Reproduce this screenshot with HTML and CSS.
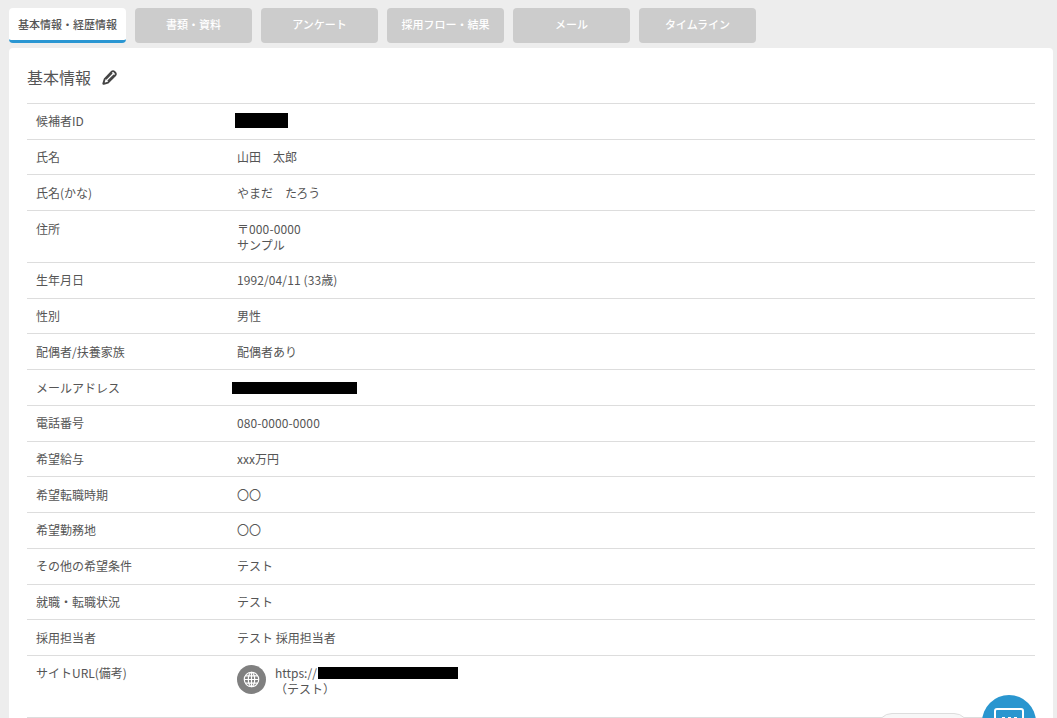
FILE: index.html
```html
<!DOCTYPE html>
<html lang="ja">
<head>
<meta charset="utf-8">
<title>基本情報</title>
<link rel="stylesheet" href="styles.css">
</head>
<body>
<nav class="tabs">
  <a class="tab active">基本情報・経歴情報</a>
  <a class="tab">書類・資料</a>
  <a class="tab">アンケート</a>
  <a class="tab">採用フロー・結果</a>
  <a class="tab">メール</a>
  <a class="tab">タイムライン</a>
</nav>
<main class="card">
  <h2 class="title">基本情報
    <svg class="pencil" viewBox="0 0 16 16" width="15" height="15" fill="none" stroke="#444"><path d="M10.4 1.8a1.9 1.9 0 0 1 2.7 0l1.1 1.1a1.9 1.9 0 0 1 0 2.7l-7.8 7.8-4.5 1.4a.4.4 0 0 1-.5-.5l1.4-4.5z" stroke-width="2" stroke-linejoin="round"/><path d="M4.2 9.8l6.6-6.6M6.2 11.8l6.6-6.6" stroke-width="1.4"/></svg>
  </h2>
  <dl class="rows">
    <div class="row"><dt>候補者ID</dt><dd><span class="mask mask-id"></span></dd></div>
    <div class="row"><dt>氏名</dt><dd>山田　太郎</dd></div>
    <div class="row"><dt>氏名(かな)</dt><dd>やまだ　たろう</dd></div>
    <div class="row"><dt>住所</dt><dd><span class="num">〒000-0000</span><br>サンプル</dd></div>
    <div class="row"><dt>生年月日</dt><dd><span class="num">1992/04/11 (33</span>歳)</dd></div>
    <div class="row"><dt>性別</dt><dd>男性</dd></div>
    <div class="row"><dt>配偶者/扶養家族</dt><dd>配偶者あり</dd></div>
    <div class="row"><dt>メールアドレス</dt><dd><span class="mask mask-mail"></span></dd></div>
    <div class="row"><dt>電話番号</dt><dd><span class="num">080-0000-0000</span></dd></div>
    <div class="row"><dt>希望給与</dt><dd>xxx万円</dd></div>
    <div class="row"><dt>希望転職時期</dt><dd>〇〇</dd></div>
    <div class="row"><dt>希望勤務地</dt><dd>〇〇</dd></div>
    <div class="row"><dt>その他の希望条件</dt><dd>テスト</dd></div>
    <div class="row"><dt>就職・転職状況</dt><dd>テスト</dd></div>
    <div class="row"><dt>採用担当者</dt><dd>テスト 採用担当者</dd></div>
    <div class="row row-site"><dt>サイトURL(備考)</dt><dd class="site">
      <span class="globe"><svg viewBox="0 0 16 16" width="17" height="17" fill="none" stroke="#fff" stroke-width="1.1"><circle cx="8" cy="8" r="6.8"/><ellipse cx="8" cy="8" rx="3" ry="6.8"/><path d="M8 1.2v13.6M1.2 8h13.6M2.2 4.6h11.6M2.2 11.4h11.6"/></svg></span>
      <span class="site-text">https://<span class="mask mask-url"></span><br>（テスト）</span>
    </dd></div>
  </dl>
</main>
<div class="pill"></div>
<div class="chat"><svg viewBox="0 0 32 32" width="32" height="32"><rect x="2" y="2" width="28" height="24" rx="2" fill="none" stroke="#fff" stroke-width="2"/><path d="M9 11h3M15 11h3M21 11h3" stroke="#fff" stroke-width="2"/></svg></div>
</body>
</html>
```
FILE: styles.css
```css
* { box-sizing: border-box; }
html, body { height: 100%; overflow: hidden; }
body {
  margin: 0;
  background: #ededed;
  color: #555;
  font-family: "Noto Sans CJK JP", "Noto Sans", sans-serif;
  font-size: 12px;
  line-height: 16px;
}
.tabs { display: flex; gap: 9px; padding: 8px 0 0 9px; height: 48px; }
.tab {
  width: 117px; height: 35px;
  display: flex; align-items: center; justify-content: center;
  background: #ccc; color: #fff;
  border-radius: 4px;
  padding-bottom: 3px;
  font-size: 11px; font-weight: 500;
}
.tab.active { background: #fff; color: #555; border-bottom: 3px solid #2a96d2; padding-bottom: 0; }
.card {
  margin: 0 4px 0 9px;
  background: #fff;
  border-radius: 4px 4px 0 0;
  padding: 18px 18px 0 18px;
  height: 800px;
}
.title {
  display: flex; align-items: center; gap: 11px;
  margin: 0; height: 37px; padding-bottom: 16px;
  font-size: 16px; font-weight: 400; line-height: 24px;
  color: #555;
}
.pencil { margin-top: 2px; }
.rows { margin: 0; border-bottom: 1px solid #ddd; }
.row {
  display: flex;
  border-top: 1px solid #ddd;
  padding: 9.4px 9px 9.35px;
}
dt { width: 201px; flex: none; }
dd { margin: 0; }
.num { letter-spacing: 0.1px; }
.mask { display: inline-block; background: #000; vertical-align: top; }
.mask-id { width: 53px; height: 15px; margin-left: -2px; }
.mask-mail { width: 125px; height: 12px; margin: 2px 0 0 -5px; }
.mask-url { width: 140px; height: 12px; margin: 2px 0 0 1px; }
.row-site { height: 62px; }
.site { display: flex; gap: 9px; }
.globe {
  width: 29px; height: 29px; border-radius: 50%;
  background: #808080;
  display: flex; align-items: center; justify-content: center;
}
.site-text { padding-top: 0; }
.pill {
  position: fixed; left: 877px; top: 713px;
  width: 92px; height: 30px;
  background: #f7f7f7; border: 1px solid #ddd; border-radius: 15px;
}
.chat {
  position: fixed; left: 982px; top: 695px;
  width: 54px; height: 54px; border-radius: 50%;
  background: #2a96cf;
  display: flex; justify-content: center; padding-top: 12px;
}
```
